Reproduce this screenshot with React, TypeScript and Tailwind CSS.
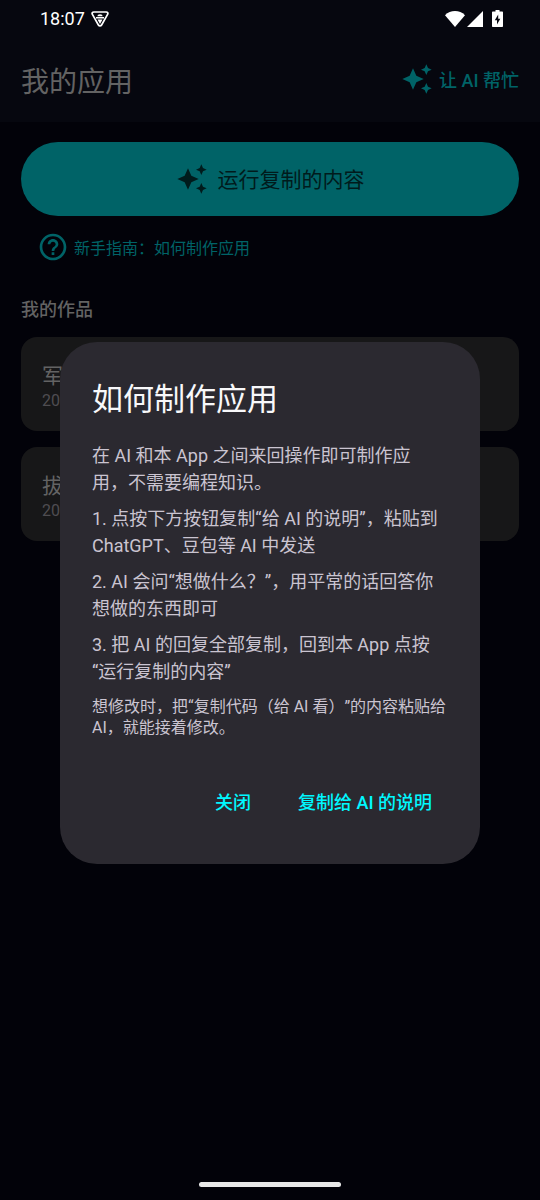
import { useState } from "react";

const steps = [
  "在 AI 和本 App 之间来回操作即可制作应用，不需要编程知识。",
  "1. 点按下方按钮复制“给 AI 的说明”，粘贴到 ChatGPT、豆包等 AI 中发送",
  "2. AI 会问“想做什么？”，用平常的话回答你想做的东西即可",
  "3. 把 AI 的回复全部复制，回到本 App 点按“运行复制的内容”",
];

const works = [
  { name: "军", date: "20" },
  { name: "拔", date: "20" },
];

function SparkleIcon() {
  return (
    <svg viewBox="0 0 24 24" className="w-8 h-8 shrink-0" fill="currentColor" aria-hidden="true">
      <path d="M19 9l1.25-2.75L23 5l-2.75-1.25L19 1l-1.25 2.75L15 5l2.75 1.25L19 9zM11.5 9.5L9 4 6.5 9.5 1 12l5.5 2.5L9 20l2.5-5.5L17 12l-5.5-2.5zM19 15l-1.25 2.75L15 19l2.75 1.25L19 23l1.25-2.75L23 19l-2.75-1.25L19 15z" />
    </svg>
  );
}

function HelpIcon() {
  return (
    <svg viewBox="0 0 24 24" className="w-8 h-8 shrink-0" fill="currentColor" aria-hidden="true">
      <path d="M11 18h2v-2h-2v2zm1-16C6.48 2 2 6.48 2 12s4.48 10 10 10 10-4.48 10-10S17.52 2 12 2zm0 18c-4.41 0-8-3.59-8-8s3.59-8 8-8 8 3.59 8 8-3.59 8-8 8zm0-14c-2.21 0-4 1.79-4 4h2c0-1.1.9-2 2-2s2 .9 2 2c0 2-3 1.75-3 5h2c0-2.25 3-2.5 3-5 0-2.21-1.79-4-4-4z" />
    </svg>
  );
}

function StatusBar() {
  return (
    <div className="flex items-center justify-between h-[37px] pl-10 pr-[37px] text-white">
      <div className="flex items-center gap-[6px]">
        <span className="text-[18px] leading-6">18:07</span>
        <svg viewBox="0 0 18 16" className="w-[18px] h-4" fill="none" aria-hidden="true">
          <path d="M2.8 1h12.4c1.4 0 2.1 1.3 1.4 2.4L10.6 14c-.7 1.2-2.5 1.2-3.2 0L1.4 3.4C.7 2.3 1.4 1 2.8 1z" stroke="currentColor" strokeWidth="1.7" />
          <path d="M6.3 5.2a2.7 2 0 0 1 5.4 0zM5 6h8v1.6H5zM6.5 8.5h5L9 12.9z" fill="currentColor" />
        </svg>
      </div>
      <div className="flex items-center">
        <svg viewBox="0 0 20 16" className="w-5 h-4" fill="currentColor" aria-hidden="true">
          <path d="M10 16L0 4.2C2.8 1.4 6.2 0 10 0s7.2 1.4 10 4.2z" />
        </svg>
        <svg viewBox="0 0 16 16" className="w-4 h-4 ml-[2px]" fill="currentColor" aria-hidden="true">
          <path d="M16 0v16H0z" />
        </svg>
        <svg viewBox="0 0 11 17" className="w-[11px] h-[17px] ml-[9px]" aria-hidden="true">
          <path d="M3.5 0h4v1.5H10c.6 0 1 .4 1 1V16c0 .6-.4 1-1 1H1c-.6 0-1-.4-1-1V2.5c0-.6.4-1 1-1h2.5z" fill="currentColor" />
          <path d="M6.2 4.5L2.8 10.2H5v4.3l3.3-5.8H6.2z" fill="#06070f" />
        </svg>
      </div>
    </div>
  );
}

function HelpDialog({ onClose }: { onClose: () => void }) {
  return (
    <div className="fixed inset-0 flex items-center justify-center px-15 pt-[6px]">
      <div role="dialog" aria-modal="true" aria-labelledby="help-title" className="w-full max-w-[560px] rounded-[37px] bg-[#2b2930] px-8 pt-8 pb-9">
        <h2 id="help-title" className="text-[31px] leading-[52px] text-[#f8f8fa]">如何制作应用</h2>
        <div className="flex flex-col gap-[9px] mt-4 text-[18px] leading-[27px] text-[#cac4d0]">
          {steps.map((step) => (
            <p key={step} className="pr-1">{step}</p>
          ))}
          <p className="pt-[2px] text-base leading-[21px]">想修改时，把“复制代码（给 AI 看）”的内容粘贴给 AI，就能接着修改。</p>
        </div>
        <div className="flex justify-end mt-[38px] gap-[15px] text-[18px] font-medium text-[#00f8ff]">
          <button onClick={onClose} className="h-[52px] px-4 rounded-full cursor-pointer">关闭</button>
          <button className="h-[52px] px-4 rounded-full cursor-pointer">复制给 AI 的说明</button>
        </div>
      </div>
    </div>
  );
}

function App() {
  const [showHelp, setShowHelp] = useState(true);

  return (
    <div
      lang="zh-CN"
      className="min-h-screen flex flex-col bg-[#020209] font-[Roboto,'Noto_Sans_CJK_SC',sans-serif] [text-spacing-trim:space-all]"
    >
      <header className="bg-[#06070f] pb-[2px]">
        <StatusBar />
        <div className="flex items-center justify-between h-[83px] px-[21px]">
          <h1 className="pt-2 text-[28px] leading-10 text-[#636363]">我的应用</h1>
          <button className="flex items-center gap-[6px] text-[18px] font-medium text-[#006367] cursor-pointer">
            <SparkleIcon />
            <span className="pt-1">让 AI 帮忙</span>
          </button>
        </div>
      </header>

      <main className="flex-1 px-[21px] pt-5">
        <button className="w-full h-[74px] flex items-center justify-center gap-[10px] rounded-full bg-[#006367] text-[#001b1c] text-[21px] cursor-pointer">
          <SparkleIcon />
          <span className="pt-1">运行复制的内容</span>
        </button>
        <button
          onClick={() => setShowHelp(true)}
          className="flex items-center gap-[5px] h-[62px] px-4 text-base text-[#006367] cursor-pointer"
        >
          <HelpIcon />
          <span className="pt-1">新手指南：如何制作应用</span>
        </button>
        <h2 className="mt-[18px] text-[18px] leading-[27px] font-medium text-[#636363]">我的作品</h2>
        <ul className="flex flex-col gap-4 mt-[14px]">
          {works.map((work) => (
            <li key={work.name} className="rounded-2xl bg-[#171718] px-[21px] pt-[25px] pb-5">
              <p className="text-[21px] leading-7 text-[#636363]">{work.name}</p>
              <p className="text-base leading-[21px] text-[#4f4d51]">{work.date}</p>
            </li>
          ))}
        </ul>
      </main>

      <footer className="flex justify-center pb-[13px]">
        <div className="w-[142px] h-[5px] rounded-full bg-[#e8e8e8]" />
      </footer>

      {showHelp && <HelpDialog onClose={() => setShowHelp(false)} />}
    </div>
  );
}

export default App;
